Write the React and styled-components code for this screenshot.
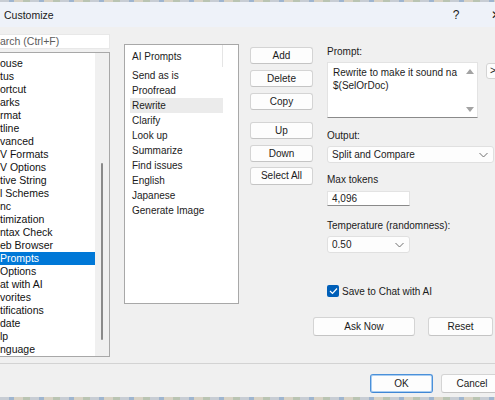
import styled, { createGlobalStyle } from 'styled-components';

const Global = createGlobalStyle`
  *, *::before, *::after { box-sizing: border-box; }
  html, body { margin: 0; padding: 0; background: #f0f0f0; }
  body { font-family: "Liberation Sans", Arial, sans-serif; font-size: 10px; color: #1b1b1b; }
`;

const Window = styled.div`
  width: 495px;
  height: 400px;
  overflow: hidden;
  display: flex;
  flex-direction: column;
  background: #f0f0f0;
`;

const DesktopStrip = styled.div`
  height: ${p => p.h}px;
  flex-shrink: 0;
  background: repeating-linear-gradient(90deg, #c8cdd4 0 9px, #9fb5cf 9px 14px, #d8d2c4 14px 23px, #b9c4b2 23px 30px);
`;

const TitleBar = styled.div`
  height: 25px;
  flex-shrink: 0;
  background: #eef2f9;
  display: flex;
  align-items: center;
  padding-left: 4px;
  font-size: 10.5px;
  color: #1a1a1a;
`;

const TitleText = styled.span`
  flex: 1;
`;

const TitleGlyph = styled.span`
  font-size: 12px;
  width: ${p => p.w}px;
  text-align: center;
  margin-right: ${p => p.mr || 0}px;
`;

const Body = styled.div`
  flex: 1;
  display: flex;
  padding-top: 7px;
`;

const LeftCol = styled.div`
  width: 110px;
  flex-shrink: 0;
  display: flex;
  flex-direction: column;
  gap: 3px;
`;

const Search = styled.div`
  height: 15px;
  background: #fff;
  border: 1px solid #e8e8e8;
  border-left: none;
  line-height: 13px;
  font-size: 10.5px;
  color: #5c5c5c;
  white-space: nowrap;
  overflow: hidden;
`;

const TreeBox = styled.div`
  height: 305px;
  background: #fff;
  border: 1px solid #a8a8a8;
  border-left: none;
  display: flex;
`;

const TreeRows = styled.div`
  flex: 1;
  padding-top: 4px;
`;

const TreeRow = styled.div`
  height: 13px;
  line-height: 13px;
  font-size: 10.5px;
  white-space: nowrap;
  overflow: hidden;
  background: ${p => (p.selected ? '#0078d7' : 'transparent')};
  color: ${p => (p.selected ? '#fff' : '#111')};
`;

const VScroll = styled.div`
  width: 14px;
  background: #f0f0f0;
  display: flex;
  justify-content: center;
  padding-top: 110px;
  padding-bottom: 16px;
`;

const Thumb = styled.div`
  width: 2px;
  background: #8a8a8a;
  border-radius: 1px;
`;

const MidList = styled.div`
  width: 115px;
  height: 260px;
  margin: 10px 0 0 14px;
  flex-shrink: 0;
  background: #fff;
  border: 1px solid #a8a8a8;
  padding: 0 5px;
`;

const ListHeader = styled.div`
  height: 22px;
  width: 93px;
  line-height: 24px;
  padding-left: 2px;
  border-right: 1px solid #e5e5e5;
  margin-bottom: 1px;
`;

const ListItem = styled.div`
  height: 15px;
  line-height: 15px;
  width: 93px;
  padding-left: 2px;
  background: ${p => (p.active ? '#ebebeb' : 'transparent')};
`;

const ButtonCol = styled.div`
  width: 63px;
  margin: 13px 0 0 11px;
  flex-shrink: 0;
  display: flex;
  flex-direction: column;
`;

const Btn = styled.button`
  height: ${p => p.h || 17}px;
  width: ${p => (p.w ? `${p.w}px` : '100%')};
  margin-top: ${p => p.mt || 0}px;
  flex-shrink: 0;
  background: #fdfdfd;
  border: 1px solid ${p => (p.primary ? '#4a90d9' : '#d4d4d4')};
  box-shadow: ${p => (p.primary ? 'inset 0 0 0 1px #a9cdf1' : 'none')};
  border-bottom-color: ${p => (p.primary ? '#3f86d4' : '#c4c4c4')};
  border-radius: 3px;
  font-family: inherit;
  font-size: 10px;
  color: #1b1b1b;
  padding: 0;
  line-height: 14px;
`;

const Right = styled.div`
  margin-left: 14px;
  width: 200px;
  flex-shrink: 0;
  display: flex;
  flex-direction: column;
  align-items: flex-start;
`;

const Label = styled.div`
  margin-top: ${p => p.mt}px;
  height: 14px;
  line-height: 14px;
  white-space: nowrap;
`;

const PromptRow = styled.div`
  margin-top: 3px;
  display: flex;
  gap: 8px;
  align-items: flex-start;
`;

const TextArea = styled.div`
  width: 151px;
  height: 56px;
  background: #fff;
  border: 1px solid #e3e3e3;
  border-bottom: 1px solid #8a8a8a;
  display: flex;
`;

const AreaText = styled.div`
  flex: 1;
  padding: 3px 0 0 5px;
  line-height: 13px;
  white-space: nowrap;
  overflow: hidden;
`;

const AreaScroll = styled.div`
  width: 14px;
  display: flex;
  flex-direction: column;
  justify-content: space-between;
  align-items: center;
  padding: 6px 0 5px;
`;

const SideBtn = styled.div`
  width: 20px;
  height: 16px;
  margin-top: 1px;
  background: #fdfdfd;
  border: 1px solid #d4d4d4;
  border-radius: 3px;
  font-size: 10px;
  line-height: 14px;
  padding-left: 3px;
`;

const Combo = styled.div`
  margin-top: ${p => p.mt}px;
  width: ${p => p.w}px;
  height: 17px;
  background: #fdfdfd;
  border: 1px solid #e0e0e0;
  border-radius: 3px;
  display: flex;
  align-items: center;
  justify-content: space-between;
  padding: 0 5px 0 4px;
`;

const Field = styled.div`
  margin-top: ${p => p.mt}px;
  width: 83px;
  height: 15px;
  background: #fff;
  border: 1px solid #e3e3e3;
  border-bottom-color: #8a8a8a;
  padding-left: 4px;
  line-height: 13px;
`;

const CheckRow = styled.div`
  margin-top: 31px;
  display: flex;
  align-items: center;
  gap: 3px;
  height: 14px;
`;

const CheckBox = styled.div`
  width: 12px;
  height: 12px;
  border-radius: 2px;
  background: #005fb8;
  display: flex;
  align-items: center;
  justify-content: center;
`;

const ActionRow = styled.div`
  margin: 19px 0 0 -14px;
  display: flex;
  gap: 13px;
`;

const Separator = styled.div`
  height: 1px;
  background: #d3d3d3;
  flex-shrink: 0;
`;

const Footer = styled.div`
  height: 33px;
  flex-shrink: 0;
  display: flex;
  padding: 10px 0 0 370px;
  gap: 8px;
`;

const Chevron = () => (
  <svg width="9" height="6" viewBox="0 0 9 6">
    <path d="M0.5 1 L4.5 5 L8.5 1" fill="none" stroke="#707070" strokeWidth="1" />
  </svg>
);

const Arrow = ({ up }) => (
  <svg width="8" height="5" viewBox="0 0 8 5">
    <path d={up ? 'M0 5 L4 0 L8 5 Z' : 'M0 0 L8 0 L4 5 Z'} fill="#a3a3a3" />
  </svg>
);

const tree = [
  'ouse', 'tus', 'ortcut', 'arks', 'rmat', 'tline', 'vanced', 'V Formats', 'V Options',
  'tive String', 'l Schemes', 'nc', 'timization', 'ntax Check', 'eb Browser', 'Prompts',
  'Options', 'at with AI', 'vorites', 'tifications', 'date', 'lp', 'nguage',
];

const prompts = [
  'Send as is', 'Proofread', 'Rewrite', 'Clarify', 'Look up', 'Summarize',
  'Find issues', 'English', 'Japanese', 'Generate Image',
];

export default function App() {
  return (
    <Window>
      <Global />
      <DesktopStrip h={2} />
      <TitleBar>
        <TitleText>Customize</TitleText>
        <TitleGlyph w={14} mr={28}>?</TitleGlyph>
        <TitleGlyph w={8} mr={-4}>✕</TitleGlyph>
      </TitleBar>
      <Body>
        <LeftCol>
          <Search>arch (Ctrl+F)</Search>
          <TreeBox>
            <TreeRows>
              {tree.map(t => (
                <TreeRow key={t} selected={t === 'Prompts'}>{t}</TreeRow>
              ))}
            </TreeRows>
            <VScroll><Thumb /></VScroll>
          </TreeBox>
        </LeftCol>

        <MidList>
          <ListHeader>AI Prompts</ListHeader>
          {prompts.map(p => (
            <ListItem key={p} active={p === 'Rewrite'}>{p}</ListItem>
          ))}
        </MidList>

        <ButtonCol>
          <Btn>Add</Btn>
          <Btn mt={6}>Delete</Btn>
          <Btn mt={6}>Copy</Btn>
          <Btn mt={12}>Up</Btn>
          <Btn mt={6}>Down</Btn>
          <Btn mt={5} h={18}>Select All</Btn>
        </ButtonCol>

        <Right>
          <Label mt={11}>Prompt:</Label>
          <PromptRow>
            <TextArea>
              <AreaText>
                Rewrite to make it sound na<br />$(SelOrDoc)
              </AreaText>
              <AreaScroll>
                <Arrow up />
                <Arrow />
              </AreaScroll>
            </TextArea>
            <SideBtn>&gt;</SideBtn>
          </PromptRow>
          <Label mt={11}>Output:</Label>
          <Combo mt={3} w={167}>
            <span>Split and Compare</span>
            <Chevron />
          </Combo>
          <Label mt={10}>Max tokens</Label>
          <Field mt={4}>4,096</Field>
          <Label mt={13}>Temperature (randomness):</Label>
          <Combo mt={3} w={83}>
            <span>0.50</span>
            <Chevron />
          </Combo>
          <CheckRow>
            <CheckBox>
              <svg width="9" height="8" viewBox="0 0 9 8">
                <path d="M1 4 L3.5 6.5 L8 1.5" fill="none" stroke="#fff" strokeWidth="1.2" />
              </svg>
            </CheckBox>
            <span>Save to Chat with AI</span>
          </CheckRow>
          <ActionRow>
            <Btn w={102} h={19}>Ask Now</Btn>
            <Btn w={65} h={19}>Reset</Btn>
          </ActionRow>
        </Right>
      </Body>
      <Separator />
      <Footer>
        <Btn w={63} h={19} primary>OK</Btn>
        <Btn w={62} h={19}>Cancel</Btn>
      </Footer>
      <DesktopStrip h={3} />
    </Window>
  );
}
